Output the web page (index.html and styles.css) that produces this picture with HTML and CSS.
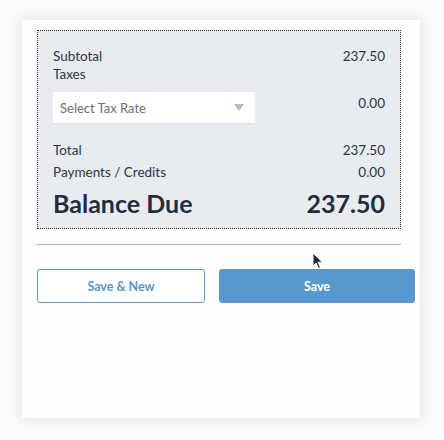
FILE: index.html
```html
<!DOCTYPE html>
<html>
<head>
<meta charset="utf-8">
<link rel="stylesheet" href="styles.css">
</head>
<body>
<div class="card">
  <div class="summary">
    <div class="row first"><span>Subtotal</span><span>237.50</span></div>
    <div class="row"><span>Taxes</span></div>
    <div class="tax-row">
      <div class="select"><span>Select Tax Rate</span><span class="arrow"></span></div>
      <span class="tax-amt">0.00</span>
    </div>
    <div class="row total"><span>Total</span><span>237.50</span></div>
    <div class="row pay"><span>Payments / Credits</span><span>0.00</span></div>
    <div class="row balance"><span>Balance Due</span><span>237.50</span></div>
  </div>
  <div class="divider"></div>
  <div class="actions">
    <button class="btn outline">Save &amp; New</button>
    <button class="btn primary">Save</button>
  </div>
  <svg class="cursor" width="12" height="18" viewBox="0 0 12 18"><path d="M1 1 L1 14 L4 11 L6.5 16.5 L8.5 15.5 L6 10.2 L10.5 10.2 Z" fill="#1f2a36" stroke="#ffffff" stroke-width="1"/></svg>
</div>
</body>
</html>
```
FILE: styles.css
```css
html, body { margin: 0; padding: 0; }
body {
  background: #fbfbfb;
  font-family: "Lato", "Liberation Sans", sans-serif;
  color: #2b3644;
  width: 444px;
  height: 440px;
  overflow: hidden;
}
.card {
  position: relative;
  margin: 20px 0 0 22px;
  width: 398px;
  height: 398px;
  background: #fefefe;
  box-shadow: 0 0 14px rgba(0,0,0,0.12);
  padding: 10px 0 0 15px;
  box-sizing: border-box;
}
.summary {
  width: 364px;
  box-sizing: border-box;
  border: 1px dotted #2a3442;
  background: #e8ecf0;
  padding: 16px 15px 10px 15px;
}
.row {
  display: flex;
  justify-content: space-between;
  font-size: 13.5px;
  line-height: 18px;
  height: 18px;
}
.tax-row {
  display: flex;
  justify-content: space-between;
  align-items: flex-start;
  margin-top: 9px;
}
.select {
  width: 202px;
  height: 32px;
  box-sizing: border-box;
  background: #ffffff;
  border-bottom: 1px solid #d5dbe1;
  display: flex;
  align-items: center;
  justify-content: space-between;
  padding: 0 11px 0 7px;
  font-size: 13px;
  color: #68717c;
}
.arrow {
  width: 0; height: 0;
  border-left: 5px solid transparent;
  border-right: 5px solid transparent;
  border-top: 7px solid #b4bac1;
}
.tax-amt { font-size: 13.5px; line-height: 18px; margin-top: 2px; }
.row.total { margin-top: 17px; }
.row.pay { margin-top: 4px; }
.row.balance {
  margin-top: 7px;
  font-size: 25px;
  font-weight: 700;
  line-height: 30px;
  height: 30px;
  color: #1f2d3d;
}
.divider {
  width: 364px;
  height: 1px;
  background: #a8b2bd;
  margin-top: 15px;
}
.actions {
  display: flex;
  gap: 14px;
  margin-top: 24px;
}
.btn {
  height: 34px;
  border-radius: 3px;
  font-family: "Lato", "Liberation Sans", sans-serif;
  font-weight: 700;
  font-size: 12.5px;
  cursor: pointer;
}
.btn.outline {
  width: 168px;
  background: #ffffff;
  border: 1px solid #5b9bd3;
  color: #5a96cb;
}
.btn.primary {
  width: 196px;
  background: #5799cf;
  border: 1px solid #5799cf;
  color: #ffffff;
}
.cursor {
  position: absolute;
  left: 290px;
  top: 232px;
}
```
